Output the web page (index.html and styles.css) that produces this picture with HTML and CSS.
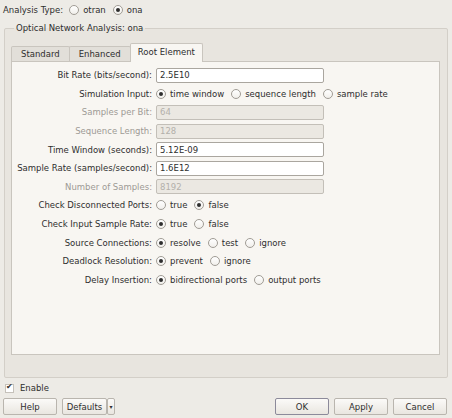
FILE: index.html
```html
<!DOCTYPE html>
<html lang="en">
<head>
    <meta charset="UTF-8">
    <title>Optical Network Analysis</title>
    <link rel="stylesheet" href="styles.css">
</head>
<body>
    <!-- Analysis type selector -->
    <div class="analysis-type">
        <span>Analysis Type:</span>
        <label class="opt"><input type="radio" name="atype"> otran</label>
        <label class="opt"><input type="radio" name="atype" checked> ona</label>
    </div>

    <fieldset class="group">
        <legend>Optical Network Analysis: ona</legend>

        <div class="tabs">
            <div class="tab">Standard</div>
            <div class="tab">Enhanced</div>
            <div class="tab active">Root Element</div>
        </div>

        <div class="panel">
            <div class="form">
                <span class="lbl">Bit Rate (bits/second):</span>
                <div class="field"><input type="text" value="2.5E10"></div>

                <span class="lbl">Simulation Input:</span>
                <div class="field">
                    <label class="opt"><input type="radio" name="sim" checked> time window</label>
                    <label class="opt"><input type="radio" name="sim"> sequence length</label>
                    <label class="opt"><input type="radio" name="sim"> sample rate</label>
                </div>

                <span class="lbl disabled">Samples per Bit:</span>
                <div class="field"><input type="text" value="64" disabled></div>

                <span class="lbl disabled">Sequence Length:</span>
                <div class="field"><input type="text" value="128" disabled></div>

                <span class="lbl">Time Window (seconds):</span>
                <div class="field"><input type="text" value="5.12E-09"></div>

                <span class="lbl">Sample Rate (samples/second):</span>
                <div class="field"><input type="text" value="1.6E12"></div>

                <span class="lbl disabled">Number of Samples:</span>
                <div class="field"><input type="text" value="8192" disabled></div>

                <span class="lbl">Check Disconnected Ports:</span>
                <div class="field">
                    <label class="opt"><input type="radio" name="cdp"> true</label>
                    <label class="opt"><input type="radio" name="cdp" checked> false</label>
                </div>

                <span class="lbl">Check Input Sample Rate:</span>
                <div class="field">
                    <label class="opt"><input type="radio" name="cisr" checked> true</label>
                    <label class="opt"><input type="radio" name="cisr"> false</label>
                </div>

                <span class="lbl">Source Connections:</span>
                <div class="field">
                    <label class="opt"><input type="radio" name="src" checked> resolve</label>
                    <label class="opt"><input type="radio" name="src"> test</label>
                    <label class="opt"><input type="radio" name="src"> ignore</label>
                </div>

                <span class="lbl">Deadlock Resolution:</span>
                <div class="field">
                    <label class="opt"><input type="radio" name="dl" checked> prevent</label>
                    <label class="opt"><input type="radio" name="dl"> ignore</label>
                </div>

                <span class="lbl">Delay Insertion:</span>
                <div class="field">
                    <label class="opt"><input type="radio" name="delay" checked> bidirectional ports</label>
                    <label class="opt"><input type="radio" name="delay"> output ports</label>
                </div>
            </div>
        </div>
    </fieldset>

    <label class="enable"><input type="checkbox" checked> Enable</label>

    <!-- Dialog buttons -->
    <div class="buttons">
        <div class="left">
            <button class="btn">Help</button>
            <div class="split">
                <button class="btn defaults">Defaults</button>
                <button class="btn arrow">&#9662;</button>
            </div>
        </div>
        <div class="right">
            <button class="btn default">OK</button>
            <button class="btn">Apply</button>
            <button class="btn">Cancel</button>
        </div>
    </div>
</body>
</html>
```

FILE: styles.css
```css
body {
    margin: 0;
    background-color: #edebe6;
    font-family: 'DejaVu Sans', sans-serif;
    font-size: 8.5px;
    color: #2e2e2e;
    width: 452px;
    height: 418px;
    overflow: hidden;
}

/* Radio buttons and checkboxes drawn by hand */
input[type="radio"] {
    appearance: none;
    width: 10px;
    height: 10px;
    margin: 0 4px 0 0;
    border: 1px solid #a09c95;
    border-radius: 50%;
    background: linear-gradient(#ffffff, #f1efeb);
    box-sizing: border-box;
    position: relative;
    flex: none;
}

input[type="radio"]:checked::after {
    content: '';
    position: absolute;
    left: 2px;
    top: 2px;
    width: 4px;
    height: 4px;
    border-radius: 50%;
    background-color: #2e2e2e;
}

.opt {
    display: inline-flex;
    align-items: center;
    margin-right: 7px;
}

.analysis-type {
    display: flex;
    align-items: center;
    height: 20px;
    padding-left: 3px;
}

.analysis-type span {
    margin-right: 6px;
}

/* Group box */
.group {
    margin: 2px 4px 0 4px;
    padding: 9px 7px 22px 6px;
    border: 1px solid #d3cfc8;
    border-radius: 2px;
    background-color: #e8e5df;
}

.group legend {
    padding: 0 2px;
    margin-left: 3px;
    line-height: 12px;
}

/* Tabs */
.tabs {
    display: flex;
    align-items: flex-end;
    height: 18px;
}

.tab {
    height: 14px;
    line-height: 14px;
    padding: 0 9px;
    border: 1px solid #c9c5be;
    border-bottom: none;
    background-color: #e2dfd9;
    margin-right: -1px;
    border-radius: 2px 2px 0 0;
}

.tab.active {
    height: 18px;
    line-height: 17px;
    padding: 0 7px;
    background-color: #f8f6f2;
    position: relative;
    top: 1px;
    z-index: 1;
}

.panel {
    background-color: #f8f6f2;
    border: 1px solid #c9c5be;
    height: 294px;
    box-sizing: border-box;
    padding-top: 4px;
}

.form {
    display: grid;
    grid-template-columns: 140px 1fr;
    grid-auto-rows: 18.6px;
    column-gap: 4px;
}

.lbl {
    text-align: right;
    align-self: center;
    white-space: nowrap;
}

.lbl.disabled {
    color: #9d9a95;
}

.field {
    display: flex;
    align-items: center;
}

.field input[type="text"] {
    width: 168px;
    height: 15px;
    box-sizing: border-box;
    border: 1px solid #aaa69f;
    border-radius: 2px;
    padding: 0 3px;
    font: inherit;
    color: #2e2e2e;
    background-color: #ffffff;
}

.field input[type="text"]:disabled {
    background-color: #ebe8e2;
    border-color: #c3bfb8;
    color: #b3b0ab;
}

/* Enable checkbox */
.enable {
    display: flex;
    align-items: center;
    height: 20px;
    padding-left: 5px;
}

.enable input {
    appearance: none;
    width: 9px;
    height: 9px;
    margin: 0 6px 0 0;
    border: 1px solid #c5c1ba;
    background-color: #ffffff;
    box-sizing: border-box;
    position: relative;
}

.enable input:checked::after {
    content: '\2714';
    position: absolute;
    left: 0;
    top: -3px;
    font-size: 8px;
    color: #2e2e2e;
}

/* Bottom buttons */
.buttons {
    display: flex;
    justify-content: space-between;
    padding: 0 5px 0 3px;
}

.left,
.right {
    display: flex;
    gap: 5px;
}

.btn {
    height: 17px;
    width: 54px;
    padding: 0;
    font: inherit;
    color: #2e2e2e;
    border: 1px solid #b9b5ae;
    border-radius: 2px;
    background: linear-gradient(#fbfaf8, #e9e6e0);
}

.btn.default {
    border-color: #8c8a9a;
}

.split {
    display: flex;
}

.btn.defaults {
    width: 45px;
}

.btn.arrow {
    width: 8px;
    font-size: 6px;
}
```
